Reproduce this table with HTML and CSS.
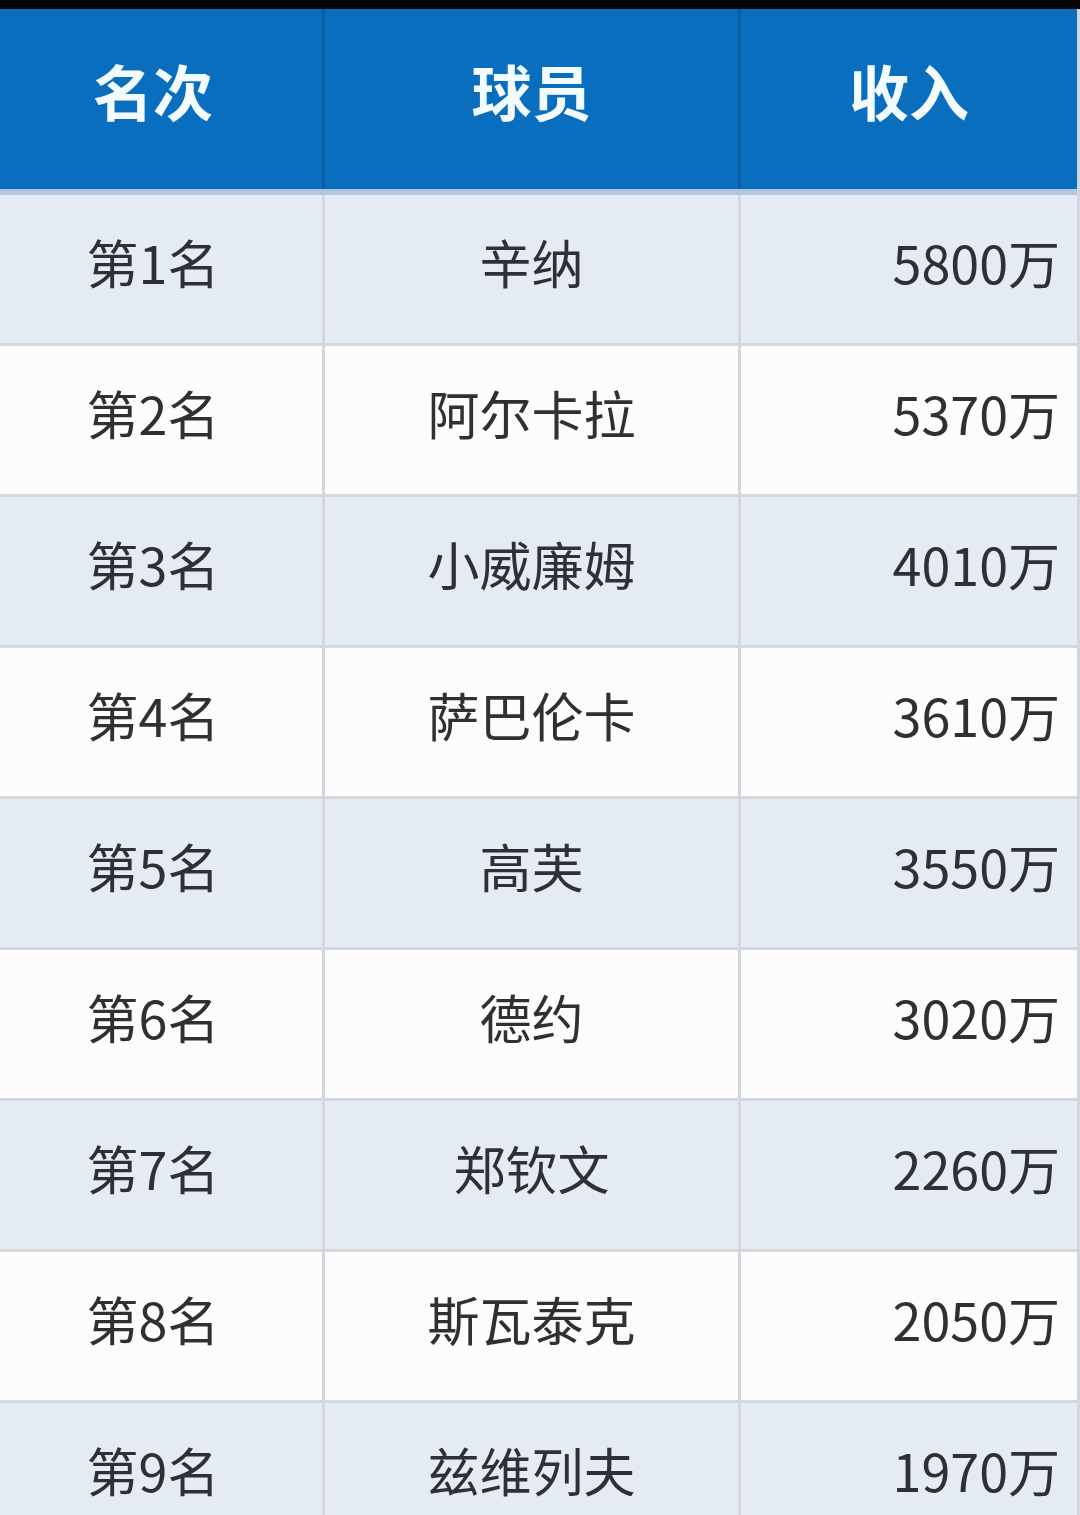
FILE: index.html
```html
<!DOCTYPE html>
<html lang="zh-CN">
<head>
<meta charset="utf-8">
<title>收入排名</title>
<link rel="stylesheet" href="styles.css">
</head>
<body>
<div class="topbar"></div>
<div class="table">
  <div class="row head">
    <div class="cell rank">名次</div>
    <div class="cell">球员</div>
    <div class="cell">收入</div>
  </div>
  <div class="row odd"><div class="cell rank">第1名</div><div class="cell">辛纳</div><div class="cell num">5800万</div></div>
  <div class="row even"><div class="cell rank">第2名</div><div class="cell">阿尔卡拉</div><div class="cell num">5370万</div></div>
  <div class="row odd"><div class="cell rank">第3名</div><div class="cell">小威廉姆</div><div class="cell num">4010万</div></div>
  <div class="row even"><div class="cell rank">第4名</div><div class="cell">萨巴伦卡</div><div class="cell num">3610万</div></div>
  <div class="row odd"><div class="cell rank">第5名</div><div class="cell">高芙</div><div class="cell num">3550万</div></div>
  <div class="row even"><div class="cell rank">第6名</div><div class="cell">德约</div><div class="cell num">3020万</div></div>
  <div class="row odd"><div class="cell rank">第7名</div><div class="cell">郑钦文</div><div class="cell num">2260万</div></div>
  <div class="row even"><div class="cell rank">第8名</div><div class="cell">斯瓦泰克</div><div class="cell num">2050万</div></div>
  <div class="row odd"><div class="cell rank">第9名</div><div class="cell">兹维列夫</div><div class="cell num">1970万</div></div>
</div>
</body>
</html>
```
FILE: styles.css
```css
html, body {
  margin: 0;
  padding: 0;
  background: #dfe3e8;
  overflow: hidden;
}
body {
  width: 1080px;
  height: 1515px;
  font-family: "Noto Sans CJK SC", "Noto Sans", sans-serif;
}
.topbar {
  height: 9px;
  background: #050505;
}
.table {
  width: 1077px;
  border-right: 3px solid #d3d7dc;
}
.row {
  display: grid;
  grid-template-columns: 322px 413px 336px;
  column-gap: 3px;
  background: #d3d7dc;
  border-bottom: 3px solid #d5d8dc;
  height: 148px;
}
.cell {
  display: flex;
  align-items: center;
  justify-content: center;
  font-size: 52px;
  color: #2e3033;
  padding-bottom: 16px;
  box-sizing: border-box;
}
.cell.rank {
  padding-right: 16px;
}
.cell.num {
  justify-content: flex-end;
  padding-right: 17px;
}
.odd .cell {
  background: #e4ebf4;
}
.even .cell {
  background: #fcfcfd;
}
.head {
  height: 180px;
  background: #0b5ea6;
  border-bottom: 6px solid #b3c6dc;
}
.head .cell {
  background: #0a6ebf;
  color: #f4fbff;
  font-weight: 700;
  font-size: 60px;
  padding-bottom: 20px;
}
```
